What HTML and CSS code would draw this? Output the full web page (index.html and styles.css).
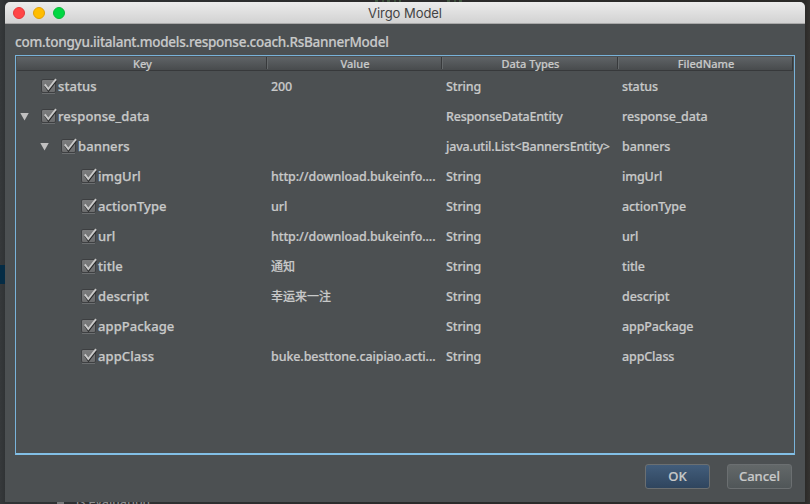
FILE: index.html
```
<!DOCTYPE html>
<html lang="en">
<head>
<meta charset="utf-8">
<title>Virgo Model</title>
<link rel="stylesheet" href="styles.css">
</head>
<body>
<svg width="0" height="0" class="defs">
  <defs>
    <linearGradient id="box" x1="0" y1="0" x2="0" y2="1"><stop offset="0" stop-color="#7c7d7e"/><stop offset="1" stop-color="#6b6c6d"/></linearGradient>
    <symbol id="check" viewBox="0 0 16 16">
      <rect x="1" y="15" width="13" height="1" fill="#6b6e70"/>
      <rect x=".5" y="1.5" width="14" height="13" rx="1.5" fill="url(#box)" stroke="#3d3f41"/>
      <path d="M4.2 7.8 7.5 12.8 15.2 2.8" fill="none" stroke="#292b2c" stroke-width="1.8"/>
      <path d="M3.8 6.4 7.3 11 15 1.2" fill="none" stroke="#c8c8c8" stroke-width="1.9"/>
    </symbol>
  </defs>
</svg>
<div class="behind-top"></div>
<div class="behind-bottom"><i></i><span>is evaluation</span></div>
<div class="behind-left"></div>
<main class="window">
  <header class="titlebar"><div class="lights"><i class="red"></i><i class="amber"></i><i class="green"></i></div><h1>Virgo Model</h1></header>
  <div class="label"><span>com.tongyu.iitalant.models.response.coach.RsBannerModel</span></div>
  <section class="table">
    <div class="head"><span>Key</span><span>Value</span><span>Data Types</span><span>FiledName</span></div>
    <div class="row l0"><div class="key"><i class="arrow none"></i><svg><use href="#check"/></svg><b>status</b></div><span>200</span><span>String</span><span>status</span></div>
    <div class="row l0"><div class="key"><i class="arrow"></i><svg><use href="#check"/></svg><b>response_data</b></div><span></span><span class="entity">ResponseDataEntity</span><span>response_data</span></div>
    <div class="row l1"><div class="key"><i class="arrow"></i><svg><use href="#check"/></svg><b>banners</b></div><span></span><span class="entity">java.util.List&lt;BannersEntity&gt;</span><span>banners</span></div>
    <div class="row l2"><div class="key"><i class="arrow none"></i><svg><use href="#check"/></svg><b>imgUrl</b></div><span class="long">http://download.bukeinfo....</span><span>String</span><span>imgUrl</span></div>
    <div class="row l2"><div class="key"><i class="arrow none"></i><svg><use href="#check"/></svg><b>actionType</b></div><span>url</span><span>String</span><span>actionType</span></div>
    <div class="row l2"><div class="key"><i class="arrow none"></i><svg><use href="#check"/></svg><b>url</b></div><span class="long">http://download.bukeinfo....</span><span>String</span><span>url</span></div>
    <div class="row l2"><div class="key"><i class="arrow none"></i><svg><use href="#check"/></svg><b>title</b></div><span class="cjk">通知</span><span>String</span><span>title</span></div>
    <div class="row l2"><div class="key"><i class="arrow none"></i><svg><use href="#check"/></svg><b>descript</b></div><span class="cjk">幸运来一注</span><span>String</span><span>descript</span></div>
    <div class="row l2"><div class="key"><i class="arrow none"></i><svg><use href="#check"/></svg><b>appPackage</b></div><span></span><span>String</span><span>appPackage</span></div>
    <div class="row l2"><div class="key"><i class="arrow none"></i><svg><use href="#check"/></svg><b>appClass</b></div><span class="long">buke.besttone.caipiao.acti...</span><span>String</span><span>appClass</span></div>
  </section>
  <footer><button class="ok">OK</button><button>Cancel</button></footer>
</main>
</body>
</html>
```
FILE: styles.css
```
* { box-sizing: border-box; }
body {
  margin: 0; width: 810px; height: 504px; overflow: hidden; position: relative;
  padding: 2px 5px;
  background: linear-gradient(90deg, #36393b 0, #303335 5px, #2b2b2b 400px, #2b2a28 805px, #353331 810px);
  font: 500 13px "Noto Sans", "Noto Sans CJK SC", sans-serif; color: #c8c9c9;
}
.defs { position: absolute; }
.behind-top {
  position: absolute; left: 375px; top: 0; width: 88px; height: 2px;
  background: linear-gradient(90deg, transparent 26px, #2b2b2b 26px 70px, transparent 70px), repeating-linear-gradient(90deg, #405540 0 3px, #2b2b2b 3px 7px, #3a4c39 7px 9px, #2b2b2b 9px 12px);
}
.behind-bottom { position: absolute; left: 57px; top: 494px; height: 18px; display: flex; color: #8b8d8f; font-size: 12px; line-height: 16px; letter-spacing: .15px; }
.behind-bottom i { width: 7px; height: 10px; background: #77797b; margin-right: 12px; }
.behind-left { position: absolute; left: 0; top: 265px; width: 5px; height: 19px; background: #052c45; }
.window {
  position: relative; width: 800px; height: 500px; background: #4c5052;
  border-radius: 5px 5px 0 0; overflow: hidden; display: flex; flex-direction: column;
}
.titlebar {
  height: 22px; flex: none; display: grid; grid-template-columns: 100px 1fr 100px; align-items: center;
  background: linear-gradient(#ececec, #d2d2d2); border-bottom: 1px solid #a9a9a9;
}
.titlebar h1 { margin: 0; font: 400 13px/20px Inter, sans-serif; color: #444; text-align: center; letter-spacing: -.05px; padding-top: 1px; }
.lights { display: flex; gap: 8px; padding-left: 8px; }
.lights i { width: 12px; height: 12px; border-radius: 50%; border: 1px solid; }
.red { background: #ff4546; border-color: #e2383b !important; }
.amber { background: #ffbd00; border-color: #e0a006 !important; }
.green { background: #00d742; border-color: #0cb73a !important; }
.label { height: 31px; flex: none; padding: 8px 10px 0; font-size: 13.5px; line-height: 20px; letter-spacing: -.25px; white-space: nowrap; -webkit-text-stroke: .2px; }
.table { height: 400px; flex: none; margin: 0 10px; border: 1px solid #79b3da; border-bottom: 2px solid #82bfe6; }
.head, .row { display: grid; grid-template-columns: 251px 175px 176px 1fr; }
.head {
  height: 14px; margin: 1px 1px 0; grid-template-columns: 250px 175px 176px 1fr;
  background: linear-gradient(#5f6366, #484b4d); border-bottom: 1px solid #37393b; border-right: 1px solid #37393b;
  font-size: 11px; line-height: 14px; text-align: center; -webkit-text-stroke: .2px;
}
.head span { border-right: 1px solid #383a3c; height: 12px; box-shadow: 1px 0 #65696b; padding-left: 2px; }
.head span:last-child { border: 0; box-shadow: none; }
.row { height: 30px; align-items: center; white-space: nowrap; }
.row > span { padding: 1px 0 0 4px; line-height: 20px; font-size: 12.5px; letter-spacing: -.12px; -webkit-text-stroke: .2px; }
.key { display: flex; align-items: center; }
.key svg { width: 16px; height: 16px; margin-right: 1px; }
.key b { font-weight: 500; font-size: 13px; line-height: 20px; letter-spacing: .08px; -webkit-text-stroke: .25px; }
.l1 .key { padding-left: 20px; }
.l2 .key { padding-left: 40px; }
.arrow { margin: 1px 12px 0 4px; width: 9px; height: 8px; background: #c0c0c0; clip-path: polygon(0 0, 100% 0, 50% 100%); }
.arrow.none { visibility: hidden; }
.row .cjk { font-size: 12px; letter-spacing: 0; }
.row .entity { letter-spacing: -.2px; }
.row .long { letter-spacing: -.1px; }
footer { display: flex; gap: 17px; justify-content: flex-end; padding: 9px 13px 0; }
button {
  width: 65px; height: 25px; padding: 0 0 2px; border: 1px solid #6b6f71; border-radius: 3px;
  background: linear-gradient(#636869, #505658); color: inherit; font: 500 13px "Noto Sans", sans-serif; -webkit-text-stroke: .2px;
}
button.ok { background: linear-gradient(#425d7b, #2f455e); }
```
